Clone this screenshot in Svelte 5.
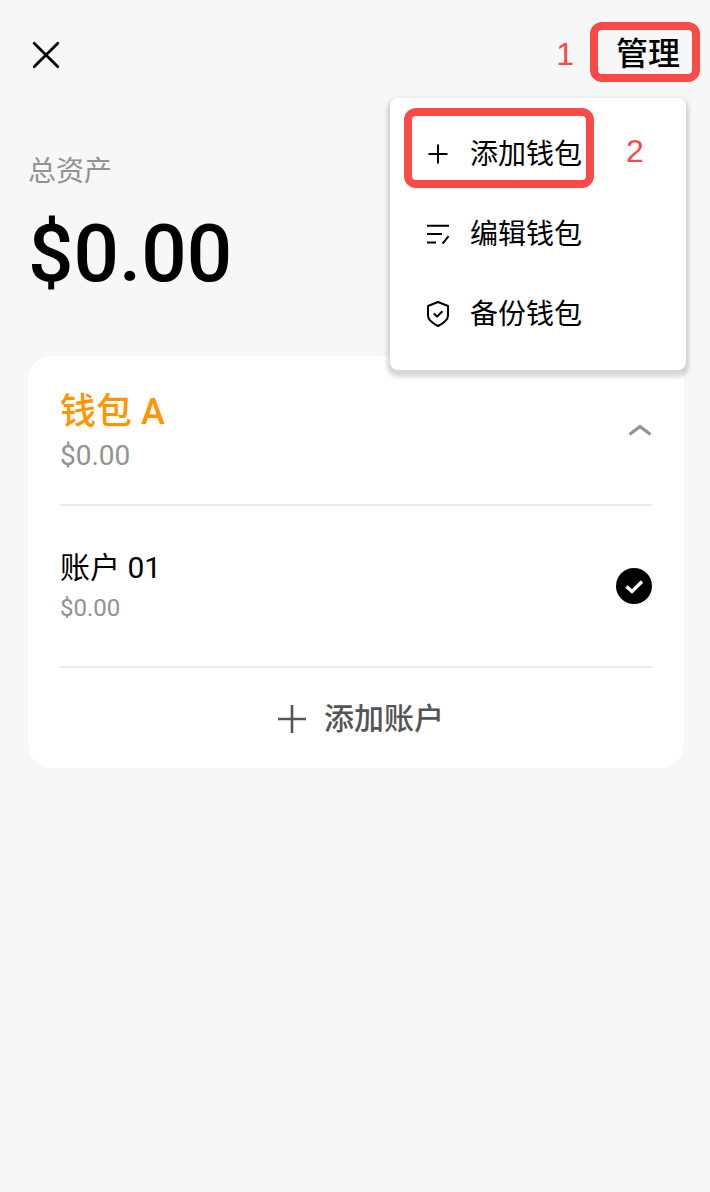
<script lang="ts">
	let menuOpen = $state(true)
	let expanded = $state(true)
	let selected = $state('01')

	const accounts = [{ id: '01', name: '账户 01', balance: '$0.00' }]
</script>

<main class="page">
	<header class="topbar">
		<button type="button" class="close" aria-label="关闭">
			<svg width="36" height="36" viewBox="0 0 36 36" fill="none" stroke="#000" stroke-width="2.8" stroke-linecap="round">
				<path d="M6.2 6.2l23.6 23.6M29.8 6.2l-23.6 23.6" />
			</svg>
		</button>
		<div class="manage-wrap">
			<span class="step">1</span>
			<button type="button" class="manage" onclick={() => (menuOpen = !menuOpen)}>管理</button>
		</div>
	</header>

	{#if menuOpen}
		<nav class="menu">
			<button type="button" class="menu-item">
				<span class="mark"></span>
				<svg width="32" height="32" viewBox="0 0 32 32" fill="none" stroke="#000" stroke-width="2">
					<path d="M16 6.5v19M6.5 16h19" />
				</svg>
				<span class="label">添加钱包</span>
				<span class="step two">2</span>
			</button>
			<button type="button" class="menu-item">
				<svg width="32" height="32" viewBox="0 0 32 32" fill="none" stroke="#000" stroke-width="2">
					<path d="M5 7.8h22M5 16h15M5 24.4h9M26.6 18.2l-6 7.4" />
				</svg>
				<span class="label">编辑钱包</span>
			</button>
			<button type="button" class="menu-item">
				<svg width="32" height="32" viewBox="0 0 32 32" fill="none" stroke="#000" stroke-width="2" stroke-linejoin="round">
					<path d="M16 4L26 8v9.5c0 4.7-4.5 7.8-10 10.5C10.5 25.3 6 22.2 6 17.5V8z" />
					<path d="M11.8 15.6l3.3 3 5.3-5.4" />
				</svg>
				<span class="label">备份钱包</span>
			</button>
		</nav>
	{/if}

	<section class="total">
		<h2>总资产</h2>
		<p>$0.00</p>
	</section>

	<section class="card">
		<button type="button" class="wallet" aria-expanded={expanded} onclick={() => (expanded = !expanded)}>
			<span class="info">
				<span class="wallet-name">钱包 A</span>
				<span class="wallet-balance">$0.00</span>
			</span>
			<svg width="24" height="24" viewBox="0 0 24 24" fill="none" stroke="#929292" stroke-width="3">
				<path d="M1.5 16.5L12 8.5l10.5 8" />
			</svg>
		</button>

		{#if expanded}
			{#each accounts as a}
				<button type="button" class="account" onclick={() => (selected = a.id)}>
					<span class="info">
						<span class="account-name">{a.name}</span>
						<span class="account-balance">{a.balance}</span>
					</span>
					{#if selected === a.id}
						<svg width="36" height="36" viewBox="0 0 36 36" fill="none">
							<circle cx="18" cy="18" r="18" fill="#000" />
							<path d="M10.5 18.5l5.5 5 10-10" stroke="#fff" stroke-width="3.4" />
						</svg>
					{/if}
				</button>
			{/each}
		{/if}

		<button type="button" class="add">
			<svg width="32" height="32" viewBox="0 0 32 32" fill="none" stroke="#555" stroke-width="2.6">
				<path d="M16 2v28M2 16h28" />
			</svg>
			<span>添加账户</span>
		</button>
	</section>
</main>

<style>
	:global(body) {
		background: #f7f7f7;
	}

	.page {
		position: relative;
		font-family: Roboto, "Noto Sans CJK SC", sans-serif;
		color: #000;
	}

	button {
		display: flex;
		align-items: center;
		padding: 0;
		border: 0;
		background: none;
		font: inherit;
		color: inherit;
		text-align: left;
		cursor: pointer;
	}

	svg {
		flex: none;
	}

	.topbar {
		display: flex;
		justify-content: space-between;
		align-items: center;
		padding: 22px 10px 0 28px;
	}

	.close {
		margin-top: 6px;
	}

	.manage-wrap {
		display: flex;
		align-items: center;
		gap: 16px;
	}

	.manage {
		height: 60px;
		padding: 4px 12px 0 18px;
		border: 8px solid #f84b48;
		border-radius: 12px;
		font-size: 32px;
		font-weight: 500;
		line-height: 40px;
	}

	.step {
		padding-top: 4px;
		font-family: "Liberation Sans", Arial, sans-serif;
		font-size: 32px;
		line-height: 40px;
		color: #f84b48;
	}

	/* dropdown lies over the card */
	.menu {
		position: absolute;
		top: 98px;
		right: 24px;
		z-index: 1;
		box-sizing: border-box;
		width: 296px;
		padding: 16px 0;
		border-radius: 8px;
		background: #fff;
		box-shadow: 0 4px 4px 3px rgba(0, 0, 0, 0.16);
	}

	.menu-item {
		position: relative;
		width: 100%;
		height: 80px;
		padding-left: 32px;
		gap: 16px;
		font-size: 28px;
		line-height: 40px;
	}

	.label {
		padding-top: 2px;
	}

	.mark {
		position: absolute;
		top: -6px;
		left: 14px;
		box-sizing: border-box;
		width: 190px;
		height: 80px;
		border: 8px solid #f84b48;
		border-radius: 12px;
	}

	.two {
		margin-left: 28px;
		padding: 0 0 6px;
	}

	.total {
		padding: 70px 28px 0;
	}

	h2 {
		margin: 0;
		font-size: 28px;
		font-weight: 400;
		line-height: 40px;
		color: #929292;
	}

	.total p {
		margin: 14px 0 0;
		font-size: 80px;
		font-weight: 500;
		line-height: 96px;
	}

	.card {
		margin: 54px 26px 0 28px;
		padding: 0 32px;
		border-radius: 24px;
		background: #fff;
	}

	.wallet,
	.account {
		justify-content: space-between;
		width: 100%;
		border-bottom: 2px solid #ebebeb;
	}

	.wallet {
		height: 150px;
	}

	.account {
		height: 162px;
	}

	.info {
		display: flex;
		flex-direction: column;
	}

	.wallet-name {
		padding-top: 4px;
		font-size: 36px;
		font-weight: 500;
		line-height: 48px;
		color: #ff9500;
	}

	.wallet-balance {
		font-size: 28px;
		line-height: 40px;
		color: #929292;
	}

	.account-name {
		font-size: 30px;
		line-height: 44px;
	}

	.account-balance {
		font-size: 24px;
		line-height: 36px;
		color: #929292;
	}

	.add {
		justify-content: center;
		gap: 16px;
		width: 100%;
		height: 100px;
		padding: 2px 0 0 8px;
		font-size: 30px;
		font-weight: 500;
		line-height: 40px;
		color: #555;
	}
</style>
